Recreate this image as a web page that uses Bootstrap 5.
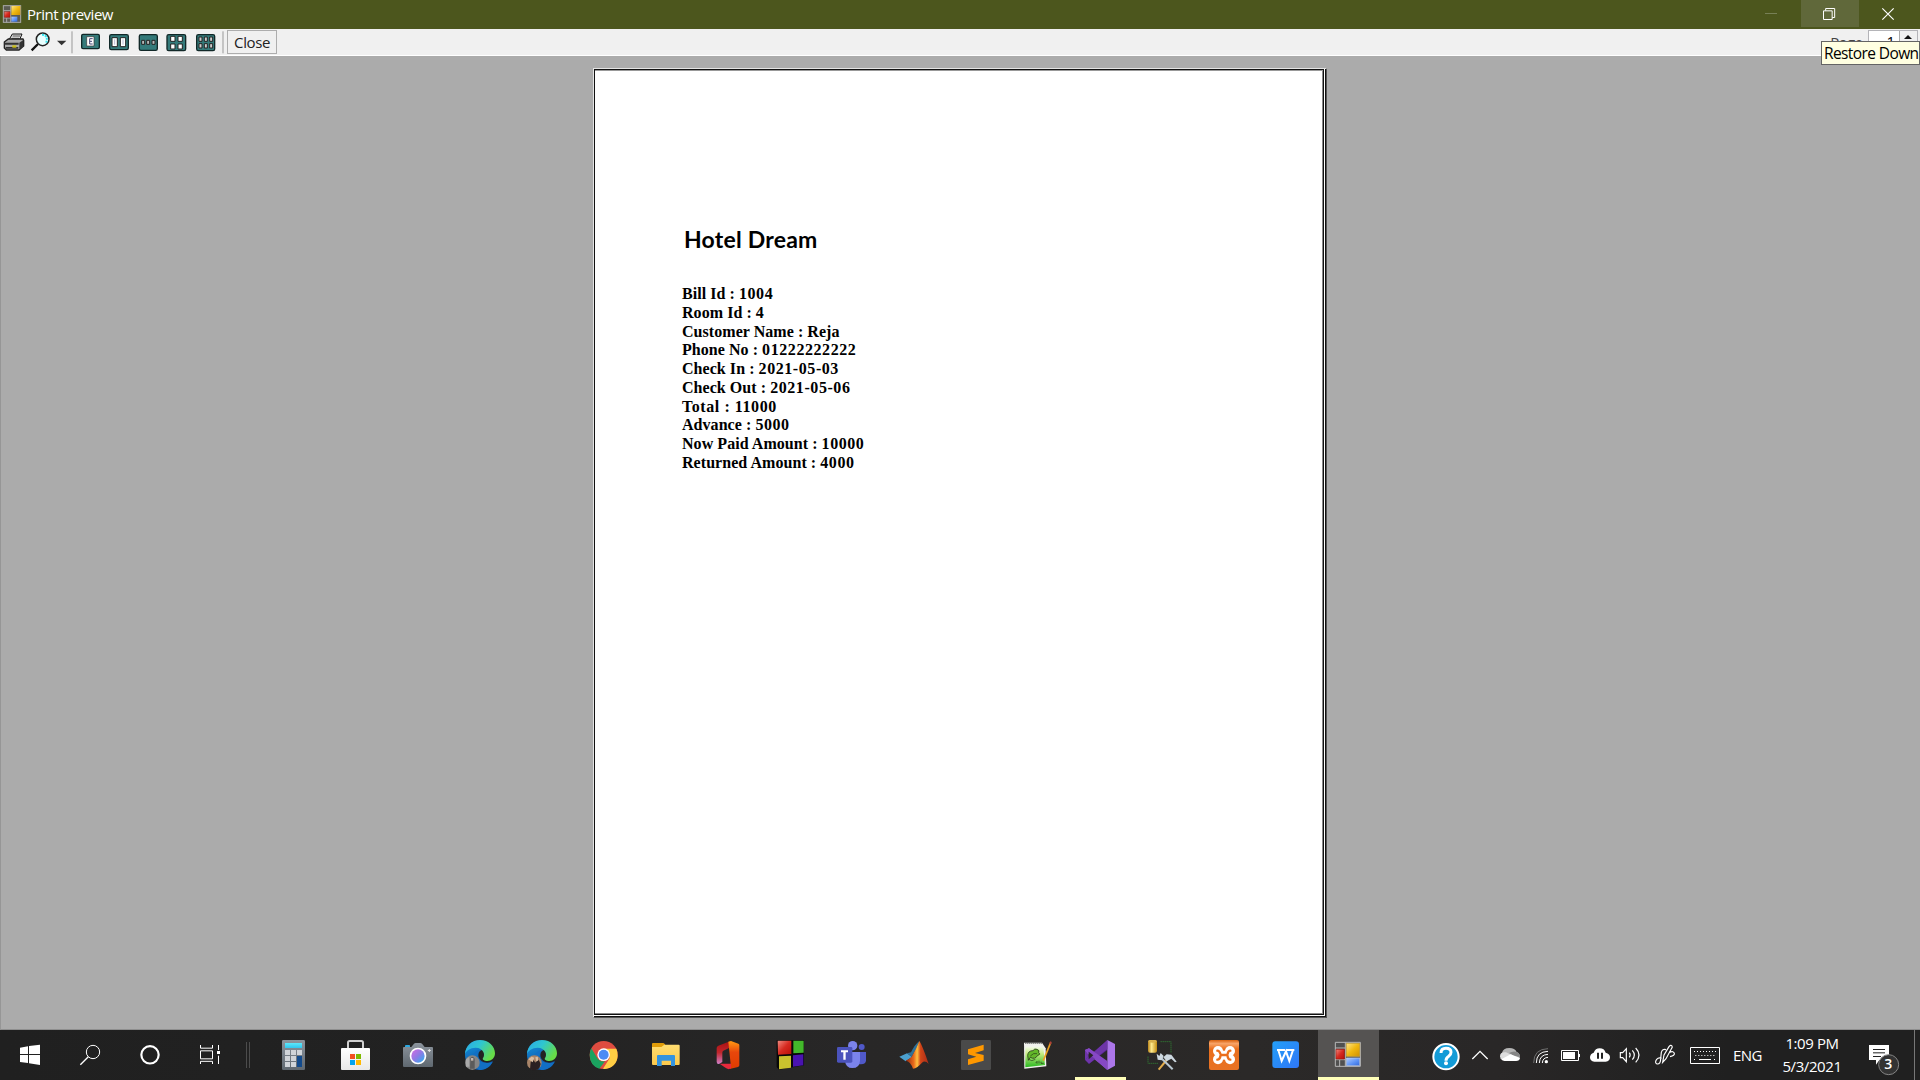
<!DOCTYPE html>
<html lang="en">
<head>
<meta charset="utf-8">
<title>Print preview</title>
<link href="https://cdn.jsdelivr.net/npm/bootstrap@5.3.0/dist/css/bootstrap.min.css" rel="stylesheet">
<style>
body{width:1920px;height:1080px;font-family:"Open Sans","Noto Sans",sans-serif;color:#000;background:#ababab}
svg{display:block;flex:none;overflow:visible}
.titlebar{height:29px;background:#4c561d;color:#fff;font-size:15px;line-height:29px}
.caption-text{letter-spacing:-.5px;margin-left:6px}
.toolstrip{height:27px;background:#f0f0f0;border-bottom:1px solid #fff}
.close-btn{width:50px;height:24px;margin-top:1px;border:1px solid #adadad;background:#f0f0f0;font-size:15px;line-height:22px;letter-spacing:-.4px;color:#222}
.page-label{font-size:15px;line-height:26px;letter-spacing:-.3px;color:#444;margin-right:5px}
.page-num{width:50px;height:25px;margin:1px 2px 0 0;border:1px solid #b4b4b8;background:#fff;font-size:15px;line-height:21px}
.spin{width:18px;background:#f0f0f0;border-left:1px solid #aaa}
.tip{right:0;top:41px;width:99px;height:24px;background:#ffffe1;border:1px solid #646464;font-size:15.5px;line-height:23px;letter-spacing:-.6px;z-index:3;white-space:nowrap;padding-left:2px}
.preview{height:974px;background:#ababab;border-left:1px solid #969696;border-bottom:1px solid #8e8e8e;padding:12px 0 0 592px}
.sheet-edge{width:734px;height:950px;border-style:solid;border-color:#e4e4e4 #555 #555 #e4e4e4;border-width:1px;background:#111;padding:0 1px 1px 0}
.sheet-gap{height:100%;background:#fff;padding:0 1px 1px 0}
.sheet{height:100%;background:#fff;border:1px solid #111;box-shadow:inset 0 1px #999,inset -1px -1px #888;padding:151px 0 0 87px}
.hotel{font:700 23px/36px Lato,sans-serif;letter-spacing:.22px;margin-left:2px}
.bill{font:700 16px/18.75px "Liberation Serif",serif;margin-top:28px;letter-spacing:.05px}
.bill span{letter-spacing:.57px}
.taskbar{height:50px;background:linear-gradient(90deg,#202020,#222 25%,#282727 45%,#2b2928 65%,#292727 78%,#202020 90%,#202020);color:#fff}
.lang{width:44px;font-size:15px;line-height:50px;padding-left:7px;letter-spacing:-.6px}
.clock{width:84px;font-size:15px;line-height:23px;padding-top:2px;letter-spacing:-.42px}
.desk{width:1px;height:50px;background:#777;margin:0 5px 0 4px}
</style>
<script src="https://cdn.jsdelivr.net/npm/bootstrap@5.3.0/dist/js/bootstrap.bundle.min.js"></script>
</head>
<body class="overflow-hidden position-relative">
<svg width="0" height="0" class="position-absolute">
<defs>
<linearGradient id="cyan" x2="0" y2="1"><stop stop-color="#5ce8fb"/><stop offset="1" stop-color="#32c5ee"/></linearGradient>
<linearGradient id="slate" x2="0" y2="1"><stop stop-color="#8c949d"/><stop offset="1" stop-color="#5f6870"/></linearGradient>
<linearGradient id="lens" x1="0" y1="0" x2="1" y2="1"><stop stop-color="#d46be0"/><stop offset=".5" stop-color="#8c7be6"/><stop offset="1" stop-color="#22b4ee"/></linearGradient>
<linearGradient id="edgeTop" x2="1" y2=".5"><stop stop-color="#2aa6ea"/><stop offset=".5" stop-color="#2fc6d0"/><stop offset="1" stop-color="#67dc48"/></linearGradient>
<linearGradient id="edgeBlue" x2=".4" y2="1"><stop stop-color="#1590dc"/><stop offset="1" stop-color="#0c4fa0"/></linearGradient>
<linearGradient id="folder" x2="0" y2="1"><stop stop-color="#ffdd70"/><stop offset="1" stop-color="#fcc94c"/></linearGradient>
<linearGradient id="offL" x2="0" y2="1"><stop stop-color="#a80f10"/><stop offset=".5" stop-color="#c1272d"/><stop offset="1" stop-color="#d080c8"/></linearGradient>
<linearGradient id="offR" x2="0" y2="1"><stop stop-color="#ff9a12"/><stop offset=".4" stop-color="#e8470c"/><stop offset="1" stop-color="#e03c00"/></linearGradient>
<linearGradient id="red" x2="1" y2="1"><stop stop-color="#f08a80"/><stop offset=".5" stop-color="#d62a20"/><stop offset="1" stop-color="#b81008"/></linearGradient>
<linearGradient id="gold" x2="1" y2="1"><stop stop-color="#ffe68a"/><stop offset=".5" stop-color="#f0b810"/><stop offset="1" stop-color="#d09000"/></linearGradient>
<linearGradient id="sky" x2="1" y2="1"><stop stop-color="#b0ccff"/><stop offset=".6" stop-color="#5a90f4"/><stop offset="1" stop-color="#3468d8"/></linearGradient>
<linearGradient id="mat" x2="1"><stop stop-color="#8c2410"/><stop offset=".35" stop-color="#e86a1c"/><stop offset=".5" stop-color="#ffc040"/><stop offset=".65" stop-color="#d04418"/><stop offset="1" stop-color="#a82c18"/></linearGradient>
<linearGradient id="cyl" x2="1"><stop stop-color="#b88418"/><stop offset=".4" stop-color="#ffeb90"/><stop offset="1" stop-color="#c08a10"/></linearGradient>
<linearGradient id="xam" x2="0" y2="1"><stop stop-color="#d8600c"/><stop offset=".12" stop-color="#f8a468"/><stop offset=".3" stop-color="#ea6f1c"/><stop offset="1" stop-color="#e87224"/></linearGradient>
<linearGradient id="green" x2="0" y2="1"><stop stop-color="#f4faea"/><stop offset=".35" stop-color="#c4ec80"/><stop offset="1" stop-color="#28b820"/></linearGradient>
<linearGradient id="wps" x2="1" y2="1"><stop stop-color="#239ff8"/><stop offset="1" stop-color="#2f76f6"/></linearGradient>
<linearGradient id="bag" x2="0" y2="1"><stop stop-color="#fff"/><stop offset="1" stop-color="#e8e8e8"/></linearGradient>
<g id="forms"><path fill="#505050" stroke="#b8b8b8" stroke-width="3" d="M1036 67h75v72h-75z"/><path stroke="#b8b8b8" stroke-width="3" d="M1066 67v72M1036 84h30M1036 119h30M1049 119v20"/><path fill="url(#red)" stroke="#a01810" stroke-width="2" d="M1038 88h25v29h-25z"/><path fill="url(#gold)" stroke="#d8b040" stroke-width="2" d="M1069 70h40v39h-40z"/><path fill="url(#sky)" stroke="#c0d0f0" stroke-width="2" d="M1069 114h40v23h-40z"/></g>
<g id="edge"><path fill="url(#edgeBlue)" d="M405 105c0-24 16-34 32-34 16 0 26 9 26 20-8-3-18 2-18 14 0 15 14 23 26 23 8 0 13-3 18-4-9 18-24 26-40 26-26 0-44-20-44-45z"/><path fill="#126fc4" d="M430 104c4-9 12-14 21-14-8 3-10 8-10 16 0 15 13 23 30 23 8 0 13-2 17-4-8 17-24 25-40 25-18-7-26-29-18-46z"/><path fill="url(#edgeTop)" d="M405 103c1-26 20-43 45-43 26 0 45 19 45 40 0 15-11 23-23 23-9 0-16-4-13-9 8-10 1-31-22-31-17 0-29 9-32 20z"/></g>
</defs></svg>

<header class="titlebar d-flex">
<svg width="21" height="29" viewBox="0 0 63 87"><rect x="10" y="17" width="52" height="50" fill="#5b5b52" stroke="#aaa" stroke-width="3"/><path stroke="#aaa" stroke-width="3" d="M32 17v50M10 32h22M10 54h22M20 54v13"/><path fill="url(#red)" stroke="#922" stroke-width="1" d="M13 35h17v17h-17z"/><path fill="url(#gold)" d="M34 18h27v27h-27z"/><path fill="url(#sky)" d="M34 50h18v15h-18z"/></svg>
<span class="caption-text">Print preview</span>
<svg class="ms-auto" width="61" height="29" viewBox="0 0 183 87"><path stroke="#778056" stroke-width="3" d="M75 40.500h36"/></svg>
<svg width="58" height="29" viewBox="183 0 174 87"><path fill="#60683a" d="M183 0h174v81h-174z"/><path fill="none" stroke="#fff" stroke-width="3" d="M250.500 32.500h26v26h-26zM257 32v-6.500h27v27h-7"/></svg>
<svg width="61" height="29" viewBox="357 0 183 87"><path stroke="#fff" stroke-width="3.500" d="M427 25l34 34M461 25l-34 34"/></svg>
</header>

<nav class="toolstrip d-flex">
<svg width="28" height="26" viewBox="0 87 84 78"><path fill="#ddd" stroke="#111" stroke-width="3" d="M26 121l11-19h29l-8 19z"/><path stroke="#555" stroke-width="3" d="M38 108h22M35 115h22"/><path fill="#aaa" stroke="#222" stroke-width="4" d="M13 126l12-9h44l2 4v17l-14 12h-38l-6-6z"/><path fill="#333" d="M13 128h43v6h-43zM17 141h38v5h-38zM58 128l12-8v18l-12 9z"/><path fill="#ccc018" d="M37 136h12v7h-12z"/></svg>
<svg width="26" height="26" viewBox="84 87 78 78"><path stroke="#111" stroke-width="7" d="M95 151l19-19"/><circle cx="128" cy="118" r="19" fill="#eaffff" stroke="#222" stroke-width="4.500"/><path fill="none" stroke="#35e3ee" stroke-width="6" stroke-dasharray="6 3" d="M126 104c14 0 18 13 12 25"/></svg>
<svg width="15" height="26" viewBox="162 87 45 78"><path fill="#333" d="M171 122h28l-14 14z"/></svg>
<svg width="7" height="26" viewBox="207 87 21 78"><path stroke="#999" stroke-width="3" d="M216 94v66"/></svg>
<svg width="29" height="26" viewBox="228 87 87 78"><rect x="245" y="103" width="53" height="43" rx="4" fill="#347a7a" stroke="#112828" stroke-width="4"/><path fill="#fff" stroke="#333" stroke-width="2" d="M260 110h22v28h-22z"/><path stroke="#447" stroke-width="3" fill="none" d="M278 116h-9v16h9M269 124h7"/></svg>
<svg width="29" height="26" viewBox="315 87 87 78"><rect x="329" y="104" width="56" height="45" rx="5" fill="#347a7a" stroke="#112828" stroke-width="4"/><path fill="#fff" stroke="#222" stroke-width="3" d="M336 113h16v27h-16zM361 113h16v27h-16z"/><path stroke="#99b" stroke-width="2" d="M344 118v16M369 118v16"/></svg>
<svg width="28" height="26" viewBox="402 87 84 78"><rect x="418" y="104" width="54" height="47" rx="5" fill="#347a7a" stroke="#112828" stroke-width="4"/><path fill="#b8b8b8" stroke="#222" stroke-width="3" d="M425 121h9v12h-9zM440 121h9v12h-9zM456 121h9v12h-9z"/></svg>
<svg width="29" height="26" viewBox="486 87 87 78"><rect x="501" y="104" width="56" height="48" rx="5" fill="#347a7a" stroke="#112828" stroke-width="4"/><path fill="#fff" stroke="#222" stroke-width="3" d="M512 109h13v15h-13zM534 109h13v15h-13zM512 132h13v15h-13zM534 132h13v15h-13z"/></svg>
<svg width="29" height="26" viewBox="573 87 87 78"><rect x="590" y="104" width="54" height="48" rx="5" fill="#347a7a" stroke="#112828" stroke-width="4"/><path fill="#ccc" stroke="#222" stroke-width="3" d="M597 111h9v13h-9zM613 111h9v13h-9zM629 111h9v13h-9zM597 131h9v13h-9zM613 131h9v13h-9zM629 131h9v13h-9z"/></svg>
<svg width="7" height="26" viewBox="660 87 21 78"><path stroke="#999" stroke-width="3" d="M669 94v66"/></svg>
<button class="close-btn p-0 text-center">Close</button>
<span class="page-label ms-auto">Page</span>
<div class="page-num d-flex"><span class="flex-fill text-end pe-1">1</span><span class="spin"><svg width="16" height="12" viewBox="0 0 16 12"><path fill="#111" d="M4 8l4-4 4 4z"/></svg></span></div>
</nav>
<div class="tip position-absolute">Restore Down</div>

<main class="preview">
<div class="sheet-edge"><div class="sheet-gap"><article class="sheet">
<h1 class="hotel mb-0">Hotel Dream</h1>
<div class="bill">
<div>Bill Id : <span>1004</span></div><div>Room Id : <span>4</span></div><div>Customer Name : Reja</div><div>Phone No : <span>01222222222</span></div><div>Check In : <span>2021-05-03</span></div><div>Check Out : <span>2021-05-06</span></div><div><span>Total : 11000</span></div><div>Advance : <span>5000</span></div><div>Now Paid Amount : <span>10000</span></div><div>Returned Amount : <span>4000</span></div>
</div></article></div></div>
</main>

<footer class="taskbar d-flex">
<svg width="60" height="50" viewBox="0 30 180 150"><path fill="#fff" d="M60 83l24-4v23h-24zM87 78l33-4v28h-33zM60 105h24v24l-24-3zM87 105h33v30l-33-5z"/></svg>
<svg width="60" height="50" viewBox="180 30 180 150"><circle cx="279" cy="96" r="20" fill="none" stroke="#fff" stroke-width="3"/><path stroke="#fff" stroke-width="4" d="M241 134l24-24"/></svg>
<svg width="60" height="50" viewBox="360 30 180 150"><circle cx="450" cy="104.500" r="26" fill="none" stroke="#fff" stroke-width="6.500"/></svg>
<svg width="60" height="50" viewBox="540 30 180 150"><path fill="none" stroke="#fff" stroke-width="3" d="M601.500 75v9.500h36v-9.500M601.500 92.500h36v24h-36zM601.500 132v-8h36v8M655.500 75v15M655.500 107v25"/><path fill="#fff" d="M651 93h9v9h-9z"/></svg>
<svg width="82" height="50" viewBox="720 30 246 150"><path stroke="#4c4c4c" stroke-width="3" d="M739.500 66v78M748.500 66v78"/><rect x="846" y="60" width="69" height="90" rx="4" fill="url(#slate)"/><path fill="url(#cyan)" d="M855 69h51v15h-51z"/><path fill="#d0d4d9" d="M855 90h15v15h-15zM873 90h15v15h-15zM891 90h15v15h-15zM855 108h15v15h-15zM873 108h15v15h-15zM855 126h15v15h-15zM873 126h15v15h-15z"/><path fill="#124a8c" d="M891 108h15v33h-15z"/></svg>
<svg width="2" height="50"></svg>
<svg width="62" height="50" viewBox="-18 30 186 150"><path fill="none" stroke="#d0d0d0" stroke-width="6" d="M54 86v-18q0-5 5-5h35q5 0 5 5v18"/><rect x="33" y="84" width="87" height="66" rx="3" fill="url(#bag)"/><path fill="#f25022" d="M60 102h15v15h-15z"/><path fill="#7fba00" d="M78 102h15v15h-15z"/><path fill="#00a4ef" d="M60 120h15v15h-15z"/><path fill="#ffb900" d="M78 120h15v15h-15z"/></svg>
<svg width="62" height="50" viewBox="168 30 186 150"><path fill="#2ba8e0" d="M225 81v-4q0-2 3-2h10q2 0 2 2v4z"/><path fill="url(#slate)" d="M222 81h22l8-10q2-2 5-2h14q3 0 5 2l8 10h22q3 0 3 3v54q0 3-3 3h-84q-3 0-3-3v-54q0-3 3-3z"/><circle cx="264" cy="108" r="25" fill="#fff"/><circle cx="264" cy="108" r="20" fill="url(#lens)"/><path stroke="#e0e0e0" stroke-width="3" d="M298 87v9M293.500 91.500h9"/></svg>
<svg width="62" height="50" viewBox="354 30 186 150"><use href="#edge"/><circle cx="427" cy="128" r="22" fill="#858585"/><path fill="#5b5b5b" d="M421 116q6-11 13 0v30h-14z"/><path fill="#c5b7af" d="M423 114h7v8h-7z"/><path fill="#aaa" d="M408 118l10-8v30l-10 0z"/></svg>
<svg width="62" height="50" viewBox="540 30 186 150"><g transform="translate(186 0)"><use href="#edge"/></g><circle cx="613" cy="128" r="22" fill="#a88468"/><path fill="#2a2022" d="M600 148l2-22 7-8 7 10 8-14 8 18-4 13q-12 10-28 3z"/><path fill="#d8bca0" d="M595 118l10-8 8 3-5 14zM616 112l7-2 3 10-7 5z"/></svg>
<svg width="62" height="50" viewBox="726 30 186 150"><circle cx="821" cy="105" r="42" fill="#de4c40"/><path fill="#1aa35f" d="M784 85l19 31q7 10 22 8l-17 22q-28-8-29-41 0-11 5-20z"/><path fill="#ffce44" d="M821 86h38q5 11 4 22-3 35-39 39l-5-1 19-30q6-16-17-30z"/><circle cx="821" cy="104" r="19" fill="#fff"/><circle cx="821" cy="104" r="15" fill="#4c8bf5"/></svg>
<svg width="62" height="50" viewBox="912 30 186 150"><path fill="#e09c08" d="M966 72q0-3 3-3h30q3 0 5 3l4 6h38v15h-80z"/><path fill="url(#folder)" d="M966 81h28l9-7h43q3 0 3 3v55q0 3-3 3h-77q-3 0-3-3z"/><path fill="#3393df" d="M981 108q0-3 3-3h48q3 0 3 3v30h-12v-16h-28v16h-14z"/></svg>
<svg width="62" height="50" viewBox="108 30 186 150"><path fill="url(#offL)" d="M170 84q0-4 5-7l37-14v19l-22 10q-3 2-3 6v28l-10 6q-7 1-7-7z"/><path fill="url(#offR)" d="M205 65l8-2 22 8q3 1 3 5v60q0 4-4 5l-25 6 3-14z"/><path fill="#e8293c" d="M179 131h34v14l-7 3q-5-1-12-6z"/></svg>
<svg width="62" height="50" viewBox="294 30 186 150"><path fill="#080808" d="M350 61h82v75l-75 13-7-8z"/><path fill="url(#red)" d="M353 62h41v40l-40 2z"/><path fill="#43b82b" d="M400 62h31v36l-31 2z"/><path fill="#c9c22e" d="M357 109l36-2v36l-36 5z"/><path fill="#4a13b0" d="M399 106l31-3v33l-31 4z"/></svg>
<svg width="62" height="50" viewBox="480 30 186 150"><circle cx="605" cy="81" r="9" fill="#5059c9"/><path fill="#5059c9" d="M588 96h30v25q0 12-15 12h-15z"/><circle cx="578" cy="77" r="14" fill="#7b83eb"/><path fill="#7b83eb" d="M555 96h45v26q-1 22-23 22-20 0-22-22z"/><rect x="531" y="81" width="46" height="47" rx="4" fill="#4b53bc"/><path fill="#fff" d="M543 91h21v6h-7v22h-7v-22h-7z"/></svg>
<svg width="62" height="50" viewBox="666 30 186 150"><path fill="#4ba0cf" d="M718 110l23-10 15 11-19 13z"/><path fill="#2e7199" d="M741 100l12-3q11-23 25-34-8 25-23 47z"/><path fill="url(#mat)" d="M737 122q11-5 18-12 15-25 23-47 9 13 28 69-11-12-20-4-14 16-27 18-8-22-22-24z"/></svg>
<svg width="62" height="50" viewBox="852 30 186 150"><rect x="903" y="60" width="90" height="90" rx="4" fill="#4a4a4a"/><path fill="#ff9800" d="M924 88l47-14v17l-26 8 26 6v17l-47 13v-17l25-8-25-7z"/></svg>
<svg width="62" height="50" viewBox="48 30 186 150"><path fill="#f2f2ee" d="M102 68h54l11 17 2 54-66 7z"/><path fill="url(#green)" d="M106 80h54l5 55-59 7z"/><path stroke="#555" stroke-width="4" stroke-dasharray="3 3" d="M106 70h50"/><path fill="#63b82a" stroke="#263a18" stroke-width="2.500" d="M113 106q1-14 16-14 5-8 12-4 9 3 5 10 8 5-3 8-8 14-22 6l-6 9z"/><path fill="none" stroke="#263a18" stroke-width="2" d="M121 108q10-11 20-7M116 118q9 8 20 0M137 129l4-5v7M147 122v8M153 125v5h8"/><path stroke="#e8a020" stroke-width="5" d="M160 122l22-54"/><path stroke="#b04038" stroke-width="5" d="M180 73l3-8"/></svg>
<svg width="62" height="50" viewBox="234 30 186 150"><path fill="#6e35a8" d="M285 90l11-4v38l-11-5z"/><path fill="#52218a" d="M285 119l12-10 55-49v30l-55 42z"/><path fill="#8d4ccb" d="M285 90l12-5 55 42v23l-60-50z"/><path fill="#ac76ea" d="M352 60l23 12v65l-23 13z"/><path fill="#6e35a8" d="M285 119l53-46 14-13v27l-55 44z"/><path fill="#8648c4" d="M285 90l12-5 55 38v27z"/><path fill="#282526" d="M296 95l14 11-14 12z"/><path fill="#ffffb9" d="M255 171h153v9h-153z"/></svg>
<svg width="62" height="50" viewBox="420 30 186 150"><rect x="474" y="60" width="27" height="38" rx="6" fill="url(#cyl)"/><ellipse cx="487.500" cy="64" rx="13" ry="4" fill="#d8b04c"/><path fill="none" stroke="#318a35" stroke-width="3" stroke-dasharray="3 3" d="M512 65h31v32M474 110v20h30"/><path stroke="#e3ad4c" stroke-width="6" d="M506 149l24-29"/><path stroke="#bac8d2" stroke-width="6" d="M511 112l37 36"/><path fill="#cdd8e0" d="M500 101l8 7 4-9 9 9-6 13-12-2zM520 112l10-9 14 1 16 21-5 2-11-11-14 8z"/></svg>
<svg width="62" height="50" viewBox="606 30 186 150"><rect x="657" y="60" width="90" height="90" rx="6" fill="url(#xam)"/><g fill="#fff"><circle cx="684" cy="93" r="15"/><circle cx="720" cy="93" r="15"/><circle cx="684" cy="118" r="15"/><circle cx="720" cy="118" r="15"/><path d="M684 92h36v27h-36z"/></g><path fill="none" stroke="#ea6f1c" stroke-width="7" stroke-linecap="round" d="M682 92q6 0 9 9M682 119q8 0 10-14h20q2 14 9 14M713 101q2-9 8-9"/></svg>
<svg width="62" height="50" viewBox="792 30 186 150"><rect x="847" y="64" width="80" height="80" rx="9" fill="url(#wps)"/><path fill="none" stroke="#fff" stroke-width="6" d="M861 90h24M865 90l10 33 13-29 10 29 11-33h-20M894 90h19"/></svg>
<svg width="62" height="50" viewBox="978 30 186 150"><path fill="#555352" d="M984 30h183v141h-183z"/><path fill="#ffffb9" d="M984 171h183v9h-183z"/><use href="#forms"/></svg>
<div class="d-flex ms-auto">
<svg width="36" height="50" viewBox="90 30 108 150"><circle cx="138" cy="110" r="38" fill="#139bd7" stroke="#fff" stroke-width="6"/><path fill="none" stroke="#fff" stroke-width="9" d="M123 99q0-14 15-14t15 12q0 7-7 12-8 5-8 13"/><circle cx="138" cy="130" r="6" fill="#fff"/></svg>
<svg width="28" height="50" viewBox="198 30 84 150"><path fill="none" stroke="#fff" stroke-width="4" d="M217 117l23-23 23 23"/></svg>
<svg width="32" height="50" viewBox="282 30 96 150"><path fill="#b5b5b5" d="M306 99q3-15 22-15 17 0 22 12 10 4 10 15l-5 8-47-9z"/><path fill="#858585" d="M335 96q9-3 16 1 9 4 9 14l-20-4-13-8z"/><path fill="#ddd" d="M300 109q0-14 18-12l22 10-25 14-13-4z"/><path fill="#fff" d="M304 118l28-15 28 11q-1 9-12 9h-34q-7 0-10-5z"/></svg>
<svg width="28" height="50" viewBox="378 30 84 150"><g fill="none" stroke="#fff" stroke-width="3"><path stroke="#707070" d="M401 129q0-42 43-43"/><path d="M409 129q0-34 35-35M418 129q1-25 26-26M427 129q1-16 17-17"/></g><circle cx="439" cy="125" r="5" fill="#fff"/></svg>
<svg width="30" height="50" viewBox="462 30 90 150"><path fill="none" stroke="#fff" stroke-width="3" d="M484.500 91.500h51v30h-51z"/><path fill="#fff" d="M489 96h36v21h-36zM537 102h3v9h-3z"/></svg>
<svg width="30" height="50" viewBox="552 30 90 150"><path fill="#fff" d="M583 125q-13-1-13-13 0-10 11-14 5-13 18-13 14 0 18 13 13 3 13 14 0 12-13 13z"/><path stroke="#222" stroke-width="6" d="M594 98v18M606 98v18"/></svg>
<svg width="32" height="50" viewBox="642 30 96 150"><path fill="none" stroke="#fff" stroke-width="3.500" d="M661 98h7l11-12v39l-11-12h-7zM688 98q5 7 0 14M697 91q12 14 0 28M707 84q20 21 0 43"/></svg>
<svg width="36" height="50" viewBox="-12 30 108 150"><path fill="none" stroke="#fff" stroke-width="3.500" d="M38 127l4-22 15-25q5-7 9-2 2 3-1 7l-17 31zM48 89q-11-4-14 8l-2 19q0 17-11 16-8-4-1-14 6-7 15-3M58 97q13-5 15 3 2 6-13 10"/></svg>
<svg width="44" height="50" viewBox="96 30 132 150"><path fill="none" stroke="#fff" stroke-width="3" d="M121.500 82.500h87v48h-87z"/><path stroke="#fff" stroke-width="3" stroke-dasharray="3 6" d="M132 94.500h67M136 106.500h60M132 118.500h9M192 118.500h9"/><path stroke="#fff" stroke-width="3" d="M147 118.500h36"/></svg>
<span class="lang">ENG</span>
<div class="clock text-center"><div>1:09 PM</div><div>5/3/2021</div></div>
<svg width="56" height="50" viewBox="612 30 168 150"><path fill="#fff" d="M657 75h60v45h-29l-10 14v-14h-21z"/><path stroke="#222" stroke-width="3" d="M669 88.500h36M669 98.500h36M669 109.500h24"/><circle cx="716" cy="134" r="30" fill="#333" stroke="#858585" stroke-width="3"/><text x="715" y="148" fill="#fff" font-size="42" text-anchor="middle" font-weight="600">3</text></svg>
<div class="desk"></div>
</div>
</footer>
</body>
</html>
